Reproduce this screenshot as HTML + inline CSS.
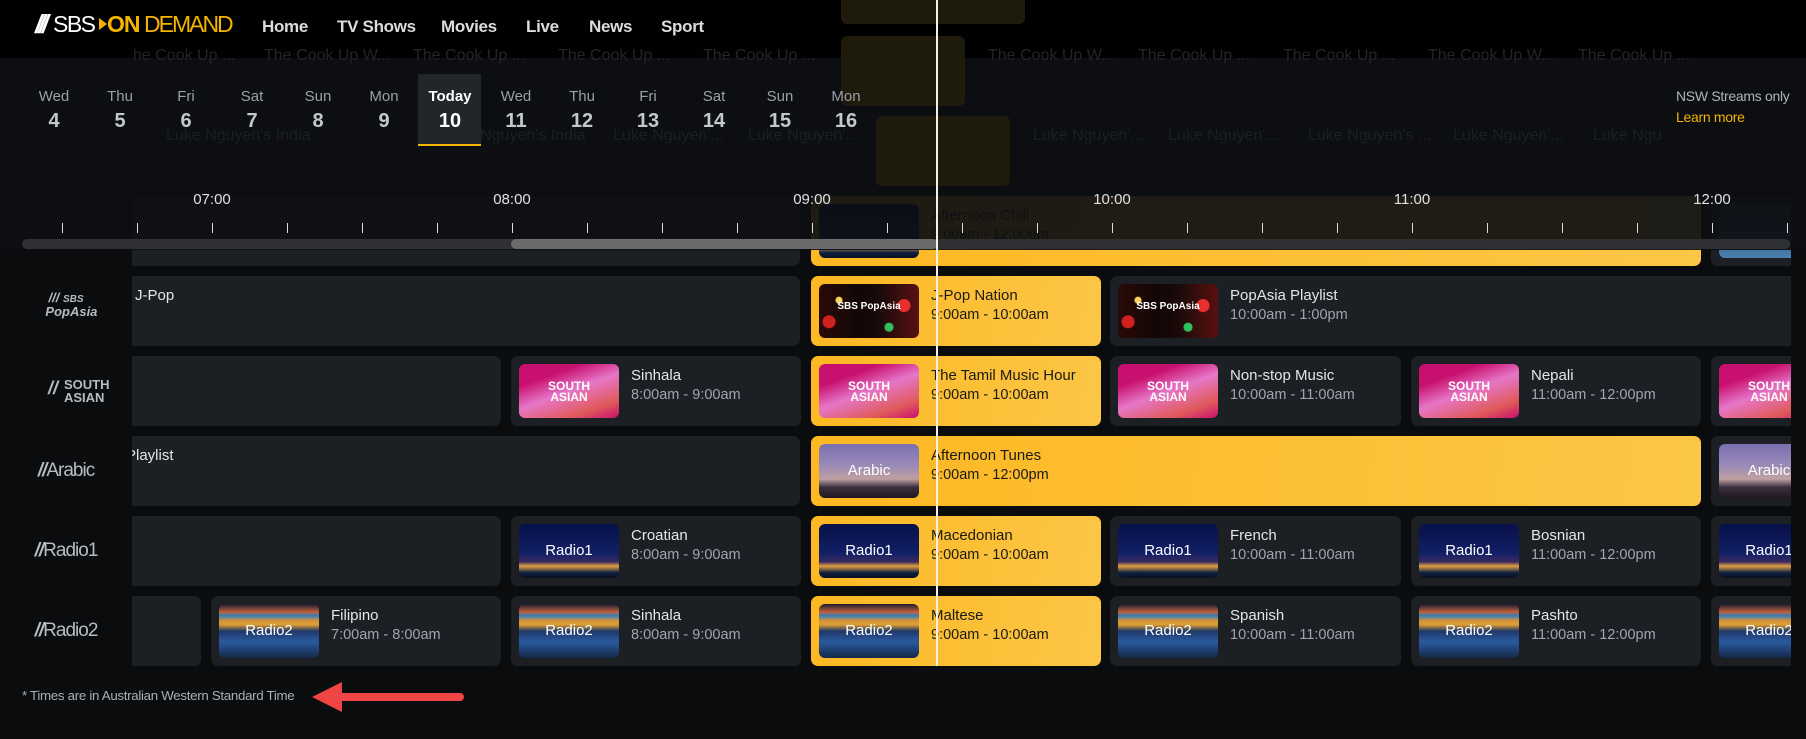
<!DOCTYPE html>
<html><head><meta charset="utf-8"><style>
*{margin:0;padding:0;box-sizing:border-box}
body{width:1806px;height:739px;background:#0b0c0e;overflow:hidden;position:relative;font-family:"Liberation Sans",sans-serif}
.a{position:absolute}
#grid{position:absolute;left:0;top:0;width:1791px;height:739px;overflow:hidden}
.c{position:absolute;height:70px;background:#1c1f23;border-radius:7px;overflow:hidden}
.y{background:linear-gradient(100deg,#fdb822,#fcc646)}
.th{position:absolute;left:8px;top:8px;width:100px;height:54px;border-radius:6px;overflow:hidden}
.t1{position:absolute;left:120px;top:11px;font-size:15px;color:#e4e6e8;white-space:nowrap}
.t2{position:absolute;left:120px;top:31px;font-size:14.5px;color:#9ea6ae;white-space:nowrap}
.y .t1,.y .t2{color:#1b1a16}
.pa{background:radial-gradient(circle at 20% 30%,#f8d25a 0 3px,transparent 4px),radial-gradient(circle at 85% 40%,#e83030 0 6px,transparent 7px),radial-gradient(circle at 10% 70%,#d02020 0 6px,transparent 7px),radial-gradient(circle at 70% 80%,#30c060 0 4px,transparent 5px),linear-gradient(90deg,#2a0a08,#120606 40%,#1a0a0a 60%,#5a1010)}
.sa{background:linear-gradient(160deg,#c80f70 0%,#c8106e 25%,#e676c8 50%,#e05a5a 80%,#c80f70 100%)}
.r1{background:linear-gradient(180deg,#071048 0%,#122066 55%,#3a2a60 70%,#e0a040 78%,#102040 90%,#081020)}
.r2{background:linear-gradient(180deg,#1a1c30 0%,#c0603a 15%,#3080c0 22%,#d09040 30%,#e0a030 38%,#203868 50%,#2a5aa0 70%,#142848)}
.ar{background:linear-gradient(180deg,#7a70b0 0%,#9a8ab8 40%,#c0a0a0 65%,#3a3040 80%,#201820)}
.lg{position:absolute;color:#fff;font-size:12px;font-weight:bold;text-align:center;width:100%;top:17px;line-height:11px}
.lg2{position:absolute;color:#fff;font-size:15px;text-align:center;width:100%;top:18px}
.cl{position:absolute;left:0;width:132px;color:#b8bcc0;text-align:center}
.dn{position:absolute;top:88px;width:66px;text-align:center;font-size:15px;color:#9aa0a6}
.dd{position:absolute;top:110px;width:66px;text-align:center;font-size:20px;font-weight:bold;color:#c4c8cc}
.tl{position:absolute;top:191px;font-size:15px;color:#e0e0e0;width:60px;text-align:center}
.tk{position:absolute;top:223px;width:1px;height:10px;background:#ddd}
.f{position:absolute;color:#1c1f22;font-size:16px;white-space:nowrap}
.nav{position:absolute;top:17px;font-size:17px;font-weight:bold;color:#dcdcdc;letter-spacing:-0.3px}
</style></head><body>
<div id="grid">
<div class="c" style="left:-100px;top:196px;width:900px"></div>
<div class="c y" style="left:811px;top:196px;width:890px"><div class="th r1"></div><div class="t1">Afternoon Chill</div><div class="t2">9:00am - 12:00pm</div></div>
<div class="c" style="left:1711px;top:196px;width:290px"><div class="th r1" style="background:linear-gradient(180deg,#2a3a50,#4a80b0)"></div></div>
<div class="c" style="left:-100px;top:276px;width:900px"><div class="t1" style="left:235px">J-Pop</div></div>
<div class="c y" style="left:811px;top:276px;width:290px"><div class="th pa"><div class="lg" style="font-size:10px">SBS PopAsia</div></div><div class="t1">J-Pop Nation</div><div class="t2">9:00am - 10:00am</div></div>
<div class="c" style="left:1110px;top:276px;width:900px"><div class="th pa"><div class="lg" style="font-size:10px">SBS PopAsia</div></div><div class="t1">PopAsia Playlist</div><div class="t2">10:00am - 1:00pm</div></div>
<div class="c" style="left:-100px;top:356px;width:601px"></div>
<div class="c" style="left:511px;top:356px;width:290px"><div class="th sa"><div class="lg">SOUTH<br>ASIAN</div></div><div class="t1">Sinhala</div><div class="t2">8:00am - 9:00am</div></div>
<div class="c y" style="left:811px;top:356px;width:290px"><div class="th sa"><div class="lg">SOUTH<br>ASIAN</div></div><div class="t1">The Tamil Music Hour</div><div class="t2">9:00am - 10:00am</div></div>
<div class="c" style="left:1110px;top:356px;width:291px"><div class="th sa"><div class="lg">SOUTH<br>ASIAN</div></div><div class="t1">Non-stop Music</div><div class="t2">10:00am - 11:00am</div></div>
<div class="c" style="left:1411px;top:356px;width:290px"><div class="th sa"><div class="lg">SOUTH<br>ASIAN</div></div><div class="t1">Nepali</div><div class="t2">11:00am - 12:00pm</div></div>
<div class="c" style="left:1711px;top:356px;width:290px"><div class="th sa"><div class="lg">SOUTH<br>ASIAN</div></div></div>
<div class="c" style="left:-100px;top:436px;width:900px"><div class="t1" style="left:226px">Playlist</div></div>
<div class="c y" style="left:811px;top:436px;width:890px"><div class="th ar"><div class="lg2">Arabic</div></div><div class="t1">Afternoon Tunes</div><div class="t2">9:00am - 12:00pm</div></div>
<div class="c" style="left:1711px;top:436px;width:290px"><div class="th ar"><div class="lg2">Arabic</div></div></div>
<div class="c" style="left:-100px;top:516px;width:601px"></div>
<div class="c" style="left:511px;top:516px;width:290px"><div class="th r1"><div class="lg2">Radio1</div></div><div class="t1">Croatian</div><div class="t2">8:00am - 9:00am</div></div>
<div class="c y" style="left:811px;top:516px;width:290px"><div class="th r1"><div class="lg2">Radio1</div></div><div class="t1">Macedonian</div><div class="t2">9:00am - 10:00am</div></div>
<div class="c" style="left:1110px;top:516px;width:291px"><div class="th r1"><div class="lg2">Radio1</div></div><div class="t1">French</div><div class="t2">10:00am - 11:00am</div></div>
<div class="c" style="left:1411px;top:516px;width:290px"><div class="th r1"><div class="lg2">Radio1</div></div><div class="t1">Bosnian</div><div class="t2">11:00am - 12:00pm</div></div>
<div class="c" style="left:1711px;top:516px;width:290px"><div class="th r1"><div class="lg2">Radio1</div></div></div>
<div class="c" style="left:-100px;top:596px;width:301px"></div>
<div class="c" style="left:211px;top:596px;width:290px"><div class="th r2"><div class="lg2">Radio2</div></div><div class="t1">Filipino</div><div class="t2">7:00am - 8:00am</div></div>
<div class="c" style="left:511px;top:596px;width:290px"><div class="th r2"><div class="lg2">Radio2</div></div><div class="t1">Sinhala</div><div class="t2">8:00am - 9:00am</div></div>
<div class="c y" style="left:811px;top:596px;width:290px"><div class="th r2"><div class="lg2">Radio2</div></div><div class="t1">Maltese</div><div class="t2">9:00am - 10:00am</div></div>
<div class="c" style="left:1110px;top:596px;width:291px"><div class="th r2"><div class="lg2">Radio2</div></div><div class="t1">Spanish</div><div class="t2">10:00am - 11:00am</div></div>
<div class="c" style="left:1411px;top:596px;width:290px"><div class="th r2"><div class="lg2">Radio2</div></div><div class="t1">Pashto</div><div class="t2">11:00am - 12:00pm</div></div>
<div class="c" style="left:1711px;top:596px;width:290px"><div class="th r2"><div class="lg2">Radio2</div></div></div>
</div>
<div class="a" style="left:0;top:196px;width:132px;height:480px;background:#0b0c0e"></div>
<div class="cl" style="top:292px;font-size:13px;font-weight:bold;font-style:italic;line-height:12px">/// <span style="font-size:10px">SBS</span><br>&nbsp;&nbsp;&nbsp;PopAsia</div>
<div class="cl" style="top:378px;font-size:13px;font-weight:bold;line-height:13px"><span style="position:absolute;left:48px;top:4px;font-style:italic;font-size:18px">//</span><span style="position:absolute;left:64px;text-align:left">SOUTH<br>ASIAN</span></div>
<div class="cl" style="top:460px;font-size:19px;letter-spacing:-1px"><i style="font-weight:bold">//</i>Arabic</div>
<div class="cl" style="top:540px;font-size:19px;letter-spacing:-1px"><i style="font-weight:bold">//</i>Radio1</div>
<div class="cl" style="top:620px;font-size:19px;letter-spacing:-1px"><i style="font-weight:bold">//</i>Radio2</div>
<div class="a" style="left:0;top:0;width:1806px;height:250px;background:rgba(13,15,18,0.93)"></div>
<div class="a" style="left:0;top:0;width:1806px;height:58px;background:rgba(0,0,0,0.9)"></div>
<div class="a" style="left:841px;top:0;width:184px;height:24px;background:#1e1a0c;border-radius:0 0 6px 6px"></div>
<div class="a" style="left:841px;top:36px;width:124px;height:70px;background:#1e1a0c;border-radius:6px"></div>
<div class="a" style="left:876px;top:116px;width:134px;height:70px;background:#1e1a0c;border-radius:6px"></div>
<div class="f" style="left:133px;top:47px;color:#222427">he Cook Up ...</div><div class="f" style="left:264px;top:47px;color:#222427">The Cook Up W...</div><div class="f" style="left:413px;top:47px;color:#222427">The Cook Up ...</div><div class="f" style="left:558px;top:47px;color:#222427">The Cook Up ...</div><div class="f" style="left:703px;top:47px;color:#222427">The Cook Up ...</div><div class="f" style="left:988px;top:47px;color:#222427">The Cook Up W...</div><div class="f" style="left:1138px;top:47px;color:#222427">The Cook Up ...</div><div class="f" style="left:1283px;top:47px;color:#222427">The Cook Up ...</div><div class="f" style="left:1428px;top:47px;color:#222427">The Cook Up W...</div><div class="f" style="left:1578px;top:47px;color:#222427">The Cook Up ...</div>
<div class="f" style="left:166px;top:127px">Luke Nguyen's India</div><div class="f" style="left:441px;top:127px">Luke Nguyen's India</div><div class="f" style="left:613px;top:127px">Luke Nguyen'...</div><div class="f" style="left:748px;top:127px">Luke Nguyen'...</div><div class="f" style="left:1033px;top:127px">Luke Nguyen'...</div><div class="f" style="left:1168px;top:127px">Luke Nguyen'...</div><div class="f" style="left:1308px;top:127px">Luke Nguyen's ...</div><div class="f" style="left:1453px;top:127px">Luke Nguyen'...</div><div class="f" style="left:1593px;top:127px">Luke Ngu</div>
<div class="a" style="left:35px;top:9px;font-size:26px;font-weight:bold;color:#fff;font-style:italic;letter-spacing:-4px">///</div>
<div class="a" style="left:53px;top:11px;font-size:23px;color:#fff;letter-spacing:-1.5px">SBS</div>
<div class="a" style="left:99px;top:18px;width:0;height:0;border-left:8px solid #f5b400;border-top:6px solid transparent;border-bottom:6px solid transparent"></div>
<div class="a" style="left:107px;top:11px;font-size:23px;color:#f5b400;font-weight:bold;letter-spacing:-1px">ON</div>
<div class="a" style="left:144px;top:11px;font-size:23px;color:#f5b400;letter-spacing:-2px">DEMAND</div>
<div class="nav" style="left:262px">Home</div><div class="nav" style="left:337px">TV Shows</div><div class="nav" style="left:441px">Movies</div><div class="nav" style="left:526px">Live</div><div class="nav" style="left:589px">News</div><div class="nav" style="left:661px">Sport</div>
<div class="a" style="left:418px;top:74px;width:63px;height:72px;background:#22252a;border-bottom:2px solid #f5b400"></div>
<div class="dn" style="left:21px">Wed</div><div class="dd" style="left:21px">4</div>
<div class="dn" style="left:87px">Thu</div><div class="dd" style="left:87px">5</div>
<div class="dn" style="left:153px">Fri</div><div class="dd" style="left:153px">6</div>
<div class="dn" style="left:219px">Sat</div><div class="dd" style="left:219px">7</div>
<div class="dn" style="left:285px">Sun</div><div class="dd" style="left:285px">8</div>
<div class="dn" style="left:351px">Mon</div><div class="dd" style="left:351px">9</div>
<div class="dn" style="left:417px;color:#fff;font-weight:bold">Today</div><div class="dd" style="left:417px;color:#fff">10</div>
<div class="dn" style="left:483px">Wed</div><div class="dd" style="left:483px">11</div>
<div class="dn" style="left:549px">Thu</div><div class="dd" style="left:549px">12</div>
<div class="dn" style="left:615px">Fri</div><div class="dd" style="left:615px">13</div>
<div class="dn" style="left:681px">Sat</div><div class="dd" style="left:681px">14</div>
<div class="dn" style="left:747px">Sun</div><div class="dd" style="left:747px">15</div>
<div class="dn" style="left:813px">Mon</div><div class="dd" style="left:813px">16</div>
<div class="a" style="left:1676px;top:88px;font-size:14px;color:#b0b4b8;letter-spacing:-0.3px">NSW Streams only</div>
<div class="a" style="left:1676px;top:109px;font-size:14px;color:#f5b400;letter-spacing:-0.3px">Learn more</div>
<div class="tl" style="left:182px">07:00</div><div class="tl" style="left:482px">08:00</div><div class="tl" style="left:782px">09:00</div><div class="tl" style="left:1082px">10:00</div><div class="tl" style="left:1382px">11:00</div><div class="tl" style="left:1682px">12:00</div>
<div class="tk" style="left:62px"></div><div class="tk" style="left:137px"></div><div class="tk" style="left:212px"></div><div class="tk" style="left:287px"></div><div class="tk" style="left:362px"></div><div class="tk" style="left:437px"></div><div class="tk" style="left:512px"></div><div class="tk" style="left:587px"></div><div class="tk" style="left:662px"></div><div class="tk" style="left:737px"></div><div class="tk" style="left:812px"></div><div class="tk" style="left:887px"></div><div class="tk" style="left:962px"></div><div class="tk" style="left:1037px"></div><div class="tk" style="left:1112px"></div><div class="tk" style="left:1187px"></div><div class="tk" style="left:1262px"></div><div class="tk" style="left:1337px"></div><div class="tk" style="left:1412px"></div><div class="tk" style="left:1487px"></div><div class="tk" style="left:1562px"></div><div class="tk" style="left:1637px"></div><div class="tk" style="left:1712px"></div><div class="tk" style="left:1787px"></div>
<div class="a" style="left:22px;top:239px;width:1768px;height:10px;border-radius:5px;background:#2e3033"></div>
<div class="a" style="left:511px;top:239px;width:427px;height:10px;border-radius:5px;background:#6a6b6d"></div>
<div class="a" style="left:936px;top:0;width:2px;height:666px;background:#f4f0e6"></div>
<div class="a" style="left:22px;top:688px;font-size:13.3px;color:#a8b0b8;letter-spacing:-0.3px">* Times are in Australian Western Standard Time</div>
<svg class="a" style="left:310px;top:680px" width="156" height="34"><path d="M32 17 H150" stroke="#f04545" stroke-width="8" stroke-linecap="round"/><path d="M2 17 L32 2 L32 32 Z" fill="#f04545"/></svg>
</body></html>
